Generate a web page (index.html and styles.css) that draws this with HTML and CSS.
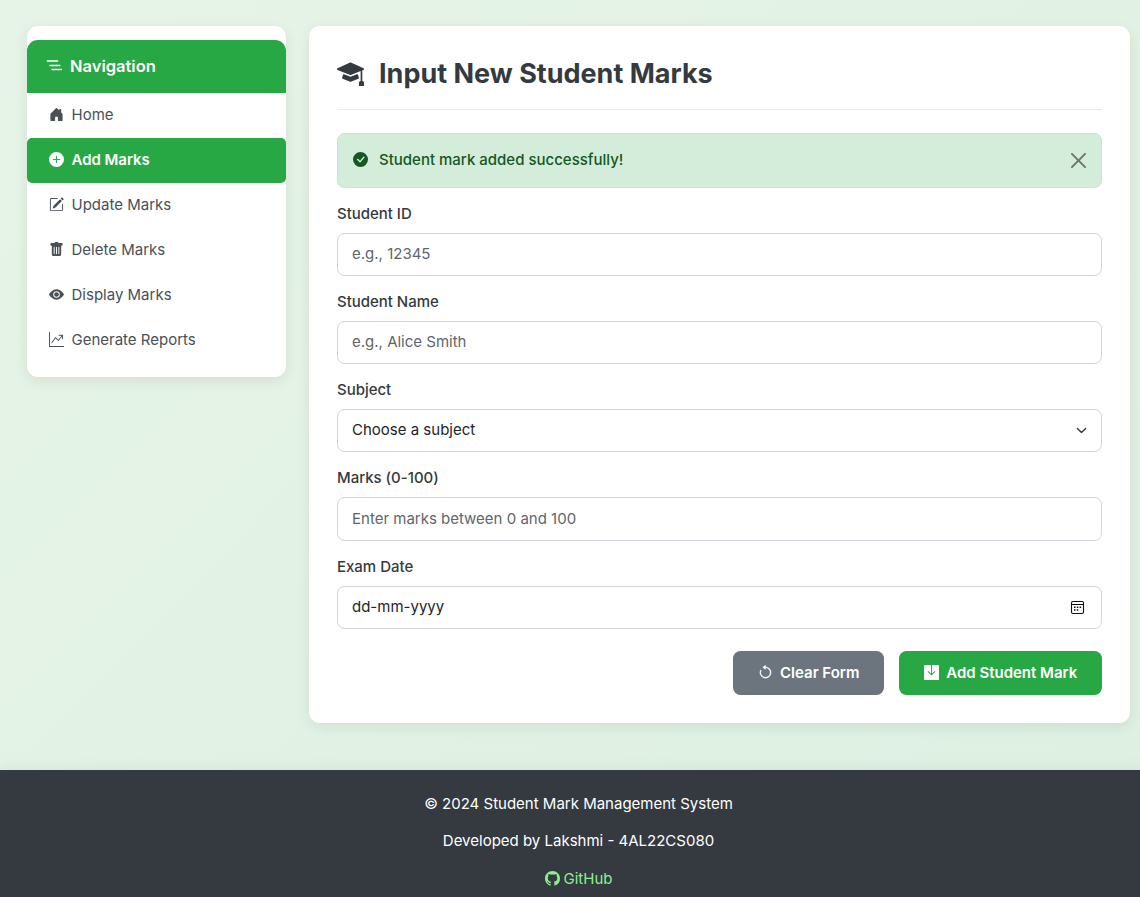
FILE: index.html
```html
<!DOCTYPE html>
<html lang="en">
<head>
<meta charset="utf-8">
<title>Student Mark Management System</title>
<link rel="stylesheet" href="styles.css">
</head>
<body>
<div class="page">
<div class="layout">
  <nav class="sidebar">
    <h2 class="sidebar-title"><svg class="icon" viewBox="0 0 16 16" fill="none" stroke="currentColor" stroke-width="1.300" stroke-linecap="round"><path d="M1.300 4h10.400M3.800 8.500h10.200M6 12.500h10"/></svg>Navigation</h2>
    <a class="nav-item"><svg class="icon" viewBox="0 0 16 16"><path d="M6.500 14.500v-3.505c0-.245.25-.495.5-.495h2c.25 0 .5.25.5.5v3.500a.5.5 0 0 0 .5.5h4a.5.5 0 0 0 .5-.5v-7a.5.5 0 0 0-.146-.354L13 5.793V2.500a.5.5 0 0 0-.5-.5h-1a.5.5 0 0 0-.5.5v1.293L8.354 1.146a.5.5 0 0 0-.708 0l-6 6A.5.5 0 0 0 1.500 7.500v7a.5.5 0 0 0 .5.5h4a.5.5 0 0 0 .5-.5"/></svg>Home</a>
    <a class="nav-item active"><svg class="icon" viewBox="0 0 16 16"><path d="M16 8A8 8 0 1 1 0 8a8 8 0 0 1 16 0M8.500 4.500a.5.5 0 0 0-1 0v3h-3a.5.5 0 0 0 0 1h3v3a.5.5 0 0 0 1 0v-3h3a.5.5 0 0 0 0-1h-3z"/></svg>Add Marks</a>
    <a class="nav-item"><svg class="icon" viewBox="0 0 16 16"><path d="M15.502 1.940a.5.5 0 0 1 0 .706L14.459 3.690l-2-2L13.502.646a.5.5 0 0 1 .707 0l1.293 1.293zm-1.750 2.456-2-2L4.939 9.210a.5.5 0 0 0-.121.196l-.805 2.414a.25.25 0 0 0 .316.316l2.414-.805a.5.5 0 0 0 .196-.12l6.813-6.814z"/><path fill-rule="evenodd" d="M1 13.500A1.500 1.500 0 0 0 2.500 15h11a1.500 1.500 0 0 0 1.500-1.500v-6a.5.5 0 0 0-1 0v6a.5.5 0 0 1-.5.5h-11a.5.5 0 0 1-.5-.5v-11a.5.5 0 0 1 .5-.5H9a.5.5 0 0 0 0-1H2.500A1.500 1.500 0 0 0 1 2.500z"/></svg>Update Marks</a>
    <a class="nav-item"><svg class="icon" viewBox="0 0 16 16"><path d="M2.500 1a1 1 0 0 0-1 1v1a1 1 0 0 0 1 1H3v9a2 2 0 0 0 2 2h6a2 2 0 0 0 2-2V4h.5a1 1 0 0 0 1-1V2a1 1 0 0 0-1-1H10a1 1 0 0 0-1-1H7a1 1 0 0 0-1 1zm3 4a.5.5 0 0 1 .5.5v7a.5.5 0 0 1-1 0v-7a.5.5 0 0 1 .5-.5M8 5a.5.5 0 0 1 .5.5v7a.5.5 0 0 1-1 0v-7A.5.5 0 0 1 8 5m3 .5v7a.5.5 0 0 1-1 0v-7a.5.5 0 0 1 1 0"/></svg>Delete Marks</a>
    <a class="nav-item"><svg class="icon" viewBox="0 0 16 16"><path d="M10.500 8a2.500 2.500 0 1 1-5 0 2.500 2.500 0 0 1 5 0"/><path d="M0 8s3-5.500 8-5.500S16 8 16 8s-3 5.500-8 5.500S0 8 0 8m8 3.500a3.500 3.500 0 1 0 0-7 3.500 3.500 0 0 0 0 7"/></svg>Display Marks</a>
    <a class="nav-item"><svg class="icon" viewBox="0 0 16 16"><path fill-rule="evenodd" d="M0 0h1v15h15v1H0zm10 3.500a.5.5 0 0 1 .5-.5h4a.5.5 0 0 1 .5.5v4a.5.5 0 0 1-1 0V4.900l-3.613 4.417a.5.5 0 0 1-.74.037L7.060 6.767l-3.656 5.027a.5.5 0 0 1-.808-.588l4-5.500a.5.5 0 0 1 .758-.06l2.609 2.610L13.445 4H10.500a.5.5 0 0 1-.5-.5"/></svg>Generate Reports</a>
  </nav>
  <main class="card">
    <h1 class="title"><svg class="icon" viewBox="0 0 16 16"><path d="M8.211 2.047a.5.5 0 0 0-.422 0l-7.500 3.500a.5.5 0 0 0 .025.917l7.500 3a.5.5 0 0 0 .372 0L14 7.140V13a1 1 0 0 0-1 1v2h3v-2a1 1 0 0 0-1-1V6.739l.686-.275a.5.5 0 0 0 .025-.917z"/><path d="M4.176 9.032a.5.5 0 0 0-.656.327l-.5 1.700a.5.5 0 0 0 .294.605l4.500 1.800a.5.5 0 0 0 .372 0l4.500-1.800a.5.5 0 0 0 .294-.605l-.5-1.700a.5.5 0 0 0-.656-.327L8 10.466z"/></svg>Input New Student Marks</h1>
    <div class="alert"><svg class="icon" viewBox="0 0 16 16"><path d="M16 8A8 8 0 1 1 0 8a8 8 0 0 1 16 0m-3.970-3.030a.75.75 0 0 0-1.080.022L7.477 9.417 5.384 7.323a.75.75 0 0 0-1.060 1.060L6.970 11.030a.75.75 0 0 0 1.079-.02l3.992-4.990a.75.75 0 0 0-.01-1.050z"/></svg><span>Student mark added successfully!</span><svg class="close" viewBox="0 0 16 16"><path d="M.293.293a1 1 0 0 1 1.414 0L8 6.586 14.293.293a1 1 0 1 1 1.414 1.414L9.414 8l6.293 6.293a1 1 0 0 1-1.414 1.414L8 9.414l-6.293 6.293a1 1 0 0 1-1.414-1.414L6.586 8 .293 1.707a1 1 0 0 1 0-1.414"/></svg></div>
    <form>
      <div class="field"><label for="sid">Student ID</label><input class="control" id="sid" placeholder="e.g., 12345"></div>
      <div class="field"><label for="sname">Student Name</label><input class="control" id="sname" placeholder="e.g., Alice Smith"></div>
      <div class="field"><label>Subject</label><div class="control"><span>Choose a subject</span><svg class="chevron" viewBox="0 0 16 16"><path fill="none" stroke="#343a40" stroke-linecap="round" stroke-linejoin="round" stroke-width="2" d="m2 5 6 6 6-6"/></svg></div></div>
      <div class="field marks"><label for="marks">Marks (0-100)</label><input class="control" id="marks" placeholder="Enter marks between 0 and 100"></div>
      <div class="field date"><label>Exam Date</label><div class="control"><span>dd-mm-yyyy</span><svg class="calendar" viewBox="0 0 15 15"><rect x="1.500" y="1.500" width="12" height="12" rx="1.500" fill="none" stroke="#111" stroke-width="1.100"/><path d="M1.500 4.500h12" stroke="#111"/><path d="M4 6.500h1.500v1.500H4zM6.800 6.500h1.500v1.500H6.800zM9.600 6.500h1.500v1.500H9.600zM4 9.300h1.500v1.500H4zM6.800 9.300h1.500v1.500H6.800z" fill="#111"/></svg></div></div>
      <div class="actions">
        <button type="button" class="btn secondary"><svg class="icon" viewBox="0 0 16 16" stroke="currentColor" stroke-width=".4"><path fill-rule="evenodd" d="M8 3a5 5 0 1 1-4.546 2.914.5.5 0 0 0-.908-.417A6 6 0 1 0 8 2z"/><path d="M8 4.466V.534a.25.25 0 0 0-.410-.192L5.230 2.308a.25.25 0 0 0 0 .384l2.360 1.966A.25.25 0 0 0 8 4.466"/></svg>Clear Form</button>
        <button type="button" class="btn primary"><svg class="icon" viewBox="0 0 16 16"><path d="M8.500 0V9.293l2.646-2.647a.5.5 0 0 1 .708.708l-3.500 3.500a.5.5 0 0 1-.708 0l-3.500-3.500a.5.5 0 1 1 .708-.708L7.500 9.293V0H.5a.5.5 0 0 0-.5.5v15a.5.5 0 0 0 .5.5h15a.5.5 0 0 0 .5-.5V.5a.5.5 0 0 0-.5-.5z"/></svg>Add Student Mark</button>
      </div>
    </form>
  </main>
</div>
<footer class="footer">
  <p>© 2024 Student Mark Management System</p>
  <p>Developed by Lakshmi - 4AL22CS080</p>
  <p><a class="github"><svg class="icon" viewBox="0 0 16 16"><path d="M8 0C3.580 0 0 3.580 0 8c0 3.540 2.290 6.530 5.470 7.590.4.070.55-.17.55-.38 0-.19-.01-.82-.01-1.490-2.010.37-2.530-.49-2.690-.94-.09-.23-.48-.94-.82-1.130-.28-.15-.68-.52-.01-.53.63-.01 1.080.58 1.230.82.72 1.210 1.870.87 2.330.66.07-.52.28-.87.51-1.070-1.780-.2-3.640-.89-3.640-3.950 0-.87.31-1.590.82-2.150-.08-.2-.36-1.020.08-2.120 0 0 .67-.21 2.200.82.64-.18 1.320-.27 2-.27s1.360.09 2 .27c1.530-1.040 2.200-.82 2.200-.82.44 1.100.16 1.920.08 2.120.51.56.82 1.270.82 2.150 0 3.070-1.870 3.750-3.650 3.950.29.25.54.73.54 1.480 0 1.070-.01 1.930-.01 2.200 0 .21.15.46.55.38A8.010 8.010 0 0 0 16 8c0-4.420-3.580-8-8-8"/></svg>GitHub</a></p>
</footer>
</div>
</body>
</html>
```
FILE: styles.css
```css
* { box-sizing: border-box; }
html { overflow: hidden; }
body { margin: 0; font: 15px/22.5px Inter, sans-serif; color: #343a40; overflow: hidden; }
.page { width: 1157px; height: 897px; display: flex; flex-direction: column; overflow: hidden; background: linear-gradient(135deg, #e6f4e7, #ddf0e2); }
.icon { width: 15px; height: 15px; fill: currentColor; flex: none; margin-bottom: 2px; }
.layout { flex: none; height: 770px; display: flex; align-items: flex-start; gap: 23px; padding: 26px 27px 0; }
.sidebar, .card { background: #fff; border-radius: 11px; box-shadow: 0 4px 14px rgba(0, 0, 0, .08); }
.sidebar { width: 259px; padding: 14px 0; }
.sidebar-title { margin: 0; height: 53px; padding: 0 19px; display: flex; align-items: center; gap: 8px; font-size: 16.500px; font-weight: 600; color: #fff; background: #28a745; border-radius: 11px 11px 0 0; }
.sidebar-title .icon { fill: none; width: 16px; height: 16px; margin-bottom: 4px; }
.nav-item { height: 45px; padding: 0 22px; display: flex; align-items: center; gap: 7.500px; color: #495057; }
.nav-item.active { color: #fff; background: #28a745; border-radius: 5px; font-weight: 600; letter-spacing: -.04px; }
.card { width: 821px; height: 697px; padding: 28px; }
.title { margin: 0 0 23px; height: 56px; padding-bottom: 15px; display: flex; align-items: center; gap: 15px; font-size: 27px; line-height: 34px; font-weight: 700; border-bottom: 1px solid #e9ecef; }
.title .icon { width: 27px; height: 27px; margin-bottom: 4px; }
.alert { height: 55px; margin-bottom: 15px; padding: 0 15px; display: flex; align-items: center; color: #155724; background: #d4edda; border: 1px solid #c3e6cb; border-radius: 7.500px; font-weight: 500; }
.alert span { flex: 1; margin-left: 11px; }
.close { width: 15px; height: 15px; opacity: .5; fill: #000; }
.field { margin-bottom: 15px; }
.field label { display: block; margin-bottom: 7.500px; font-weight: 500; letter-spacing: -.02px; }
.control { width: 100%; height: 43px; padding: 0 14px 1px; display: flex; align-items: center; justify-content: space-between; font: 400 15px/22.5px Inter, sans-serif; color: #212529; background: #fff; border: 1px solid #ced4da; border-radius: 7.500px; }
input.control { padding-bottom: 2px; }
.control::placeholder { color: #5f656b; opacity: 1; }
.marks .control { height: 44px; }
.date .control { padding-bottom: 0; }
.chevron { width: 11px; height: 11px; }
.calendar { width: 15px; height: 15px; margin-right: 2px; }
.actions { display: flex; justify-content: flex-end; gap: 15px; padding-top: 7px; }
.btn { height: 44px; padding: 0; display: flex; align-items: center; justify-content: center; gap: 7.500px; font: 600 15px/22.5px Inter, sans-serif; color: #fff; border: 0; border-radius: 7.500px; }
.secondary { width: 151px; background: #6c757d; }
.primary { width: 203px; background: #28a745; }
.footer { flex: 1; padding-top: 22.500px; background: #343a40; color: #fff; text-align: center; box-shadow: 0 -3px 12px rgba(0, 0, 0, .05); }
.footer p { margin: 0 0 15px; }
.github { display: inline-flex; align-items: center; gap: 4px; color: #90ee90; }
.github .icon { margin-bottom: 1px; }
```
